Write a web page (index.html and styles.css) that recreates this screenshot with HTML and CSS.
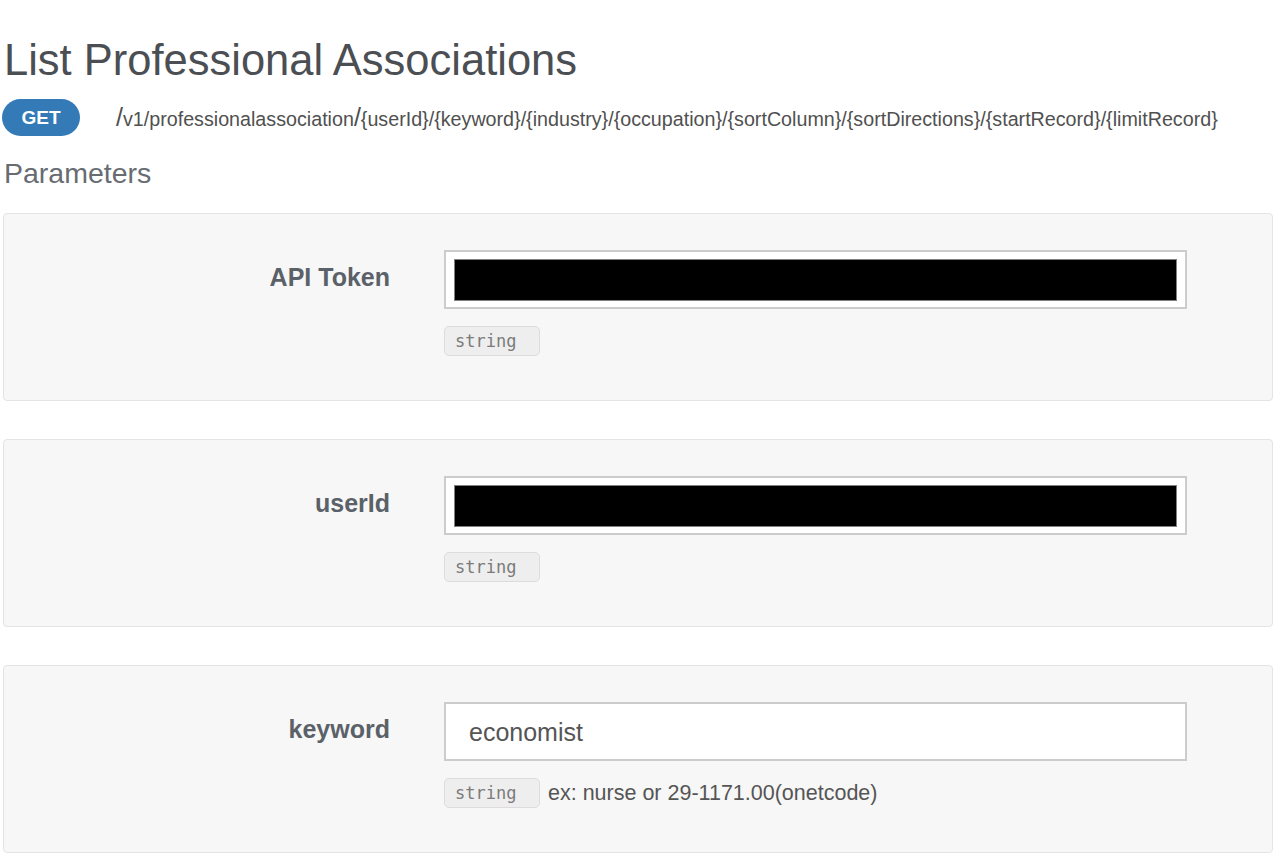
FILE: index.html
```html
<!DOCTYPE html>
<html>
<head>
<meta charset="utf-8">
<link rel="stylesheet" href="styles.css">
</head>
<body>
<div class="page">
  <h1 class="title">List Professional Associations</h1>
  <div class="endpoint">
    <span class="method">GET</span>
    <span class="path"><span class="slash">/</span>v1/professionalassociation<span class="slash">/</span>{userId}/{keyword}/{industry}/{occupation}/{sortColumn}/{sortDirections}/{startRecord}/{limitRecord}</span>
  </div>
  <h2 class="section">Parameters</h2>

  <div class="card">
    <div class="label">API Token</div>
    <div class="field">
      <div class="input"><div class="redact"></div></div>
      <div class="meta"><span class="type">string</span></div>
    </div>
  </div>

  <div class="card">
    <div class="label">userId</div>
    <div class="field">
      <div class="input"><div class="redact"></div></div>
      <div class="meta"><span class="type">string</span></div>
    </div>
  </div>

  <div class="card">
    <div class="label">keyword</div>
    <div class="field">
      <div class="input text">economist</div>
      <div class="meta"><span class="type">string</span><span class="hint">ex: nurse or 29-1171.00(onetcode)</span></div>
    </div>
  </div>
</div>
</body>
</html>
```

FILE: styles.css
```css
html, body {
  margin: 0;
  padding: 0;
  background: #ffffff;
}

body {
  font-family: "Liberation Sans", Arial, sans-serif;
}

.page {
  padding: 0 3px;
}

.title {
  margin: 0;
  padding: 37px 0 0 1px;
  font-size: 43.5px;
  font-weight: normal;
  line-height: 46px;
  color: #4b4e53;
}

.endpoint {
  display: flex;
  align-items: center;
  margin-top: 16px;
  height: 37px;
}

.method {
  display: inline-flex;
  align-items: center;
  justify-content: center;
  width: 78px;
  height: 37px;
  margin-left: -1px;
  border-radius: 19px;
  background: #337ab7;
  color: #ffffff;
  font-weight: bold;
  font-size: 19px;
}

.path {
  margin-left: 36px;
  font-size: 19.7px;
  color: #505050;
}

.slash {
  font-size: 25px;
  line-height: 1;
}

.section {
  margin: 20px 0 0 1px;
  font-size: 28.5px;
  font-weight: normal;
  line-height: 34px;
  color: #676c72;
}

.card {
  display: flex;
  margin-top: 23px;
  padding: 36px 0 36px 0;
  height: 114px;
  background: #f7f7f7;
  border: 1px solid #e4e4e4;
  border-radius: 4px;
}

.card + .card {
  margin-top: 38px;
}

.label {
  width: 386px;
  text-align: right;
  font-weight: bold;
  font-size: 25px;
  color: #5b6168;
  padding-top: 13px;
}

.field {
  margin-left: 54px;
  width: 743px;
}

.input {
  box-sizing: border-box;
  height: 59px;
  background: #ffffff;
  border: 2px solid #cccccc;
  padding: 7px 8px;
}

.redact {
  height: 42px;
  background: #000000;
  border: 1px solid #808080;
  box-sizing: border-box;
}

.input.text {
  padding: 2px 23px 0;
  display: flex;
  align-items: center;
  font-size: 25px;
  color: #555555;
}

.meta {
  display: flex;
  align-items: center;
  margin-top: 17px;
}

.type {
  box-sizing: border-box;
  display: inline-block;
  width: 96px;
  height: 30px;
  line-height: 28px;
  padding-left: 10px;
  background: #eeeeee;
  border: 1px solid #dcdcdc;
  border-radius: 5px;
  font-family: "DejaVu Sans Mono", monospace;
  font-size: 17px;
  color: #7b7b7b;
}

.hint {
  margin-left: 8px;
  font-size: 21.5px;
  color: #555555;
}
```
